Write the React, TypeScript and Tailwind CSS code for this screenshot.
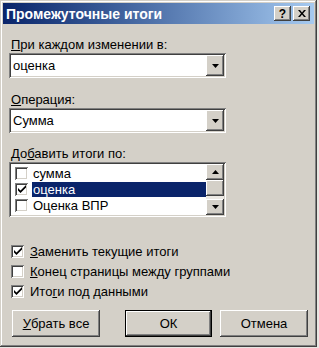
import React from "react";

const raised =
  "shadow-[inset_-1px_-1px_#404040,inset_1px_1px_#ffffff,inset_-2px_-2px_#808080,inset_2px_2px_#d4d0c8]";
const sunken =
  "shadow-[inset_1px_1px_#808080,inset_-1px_-1px_#ffffff,inset_2px_2px_#404040,inset_-2px_-2px_#d4d0c8]";

function Arrow({ up = false }: { up?: boolean }) {
  return (
    <svg width="7" height="4" viewBox="0 0 7 4">
      {up ? <polygon points="3.5,0 7,4 0,4" fill="#000" /> : <polygon points="0,0 7,0 3.5,4" fill="#000" />}
    </svg>
  );
}

function Check({ checked }: { checked: boolean }) {
  return (
    <div className={`w-[13px] h-[13px] bg-white shrink-0 flex items-center justify-center ${sunken}`}>
      {checked && (
        <svg width="8" height="8" viewBox="0 0 8 8">
          <path d="M0 3 L0 5.5 L2.5 8 L8 2.5 L8 0 L2.5 5.5 Z" fill="#000" />
        </svg>
      )}
    </div>
  );
}

function Combo({ value }: { value: string }) {
  return (
    <div className={`ml-[9px] w-[217px] h-[25px] bg-white flex items-center p-[2px] ${sunken}`}>
      <div className="flex-1 pl-[2px] text-[13px] text-black">{value}</div>
      <div className={`w-[18px] h-[21px] bg-[#d4d0c8] flex items-center justify-center ${raised}`}>
        <Arrow />
      </div>
    </div>
  );
}

export default function App() {
  const font = { fontFamily: '"Liberation Sans", Arial, sans-serif' };
  return (
    <div className="w-[319px] h-[348px] bg-[#e8e6e2]" style={font}>
      <div
        className={`w-[317px] h-[347px] bg-[#d4d0c8] flex flex-col shadow-[inset_-1px_-1px_#404040,inset_1px_1px_#d4d0c8,inset_-2px_-2px_#808080,inset_2px_2px_#ffffff]`}
      >
        <div className="mx-[3px] mt-[3px] h-[21px] bg-linear-to-r from-[#0a246a] to-[#a6caf0] flex items-center pl-[3px] pr-[4px]">
          <div className="flex-1 text-white font-bold text-[14px] leading-none">Промежуточные итоги</div>
          <div className={`w-[17px] h-[15px] bg-[#d4d0c8] flex items-center justify-center text-[12px] font-bold leading-none text-black ${raised}`}>
            ?
          </div>
          <div className={`ml-[2px] w-[17px] h-[15px] bg-[#d4d0c8] flex items-center justify-center ${raised}`}>
            <svg width="8" height="7" viewBox="0 0 8 7">
              <path d="M0 0 L2 0 L4 2.5 L6 0 L8 0 L5 3.5 L8 7 L6 7 L4 4.5 L2 7 L0 7 L3 3.5 Z" fill="#000" />
            </svg>
          </div>
        </div>

        <div className="mt-[13px] ml-[11px] h-[15px] text-[13px] leading-[15px] text-black">
          <span className="underline">П</span>ри каждом изменении в:
        </div>
        <div className="mt-px">
          <Combo value="оценка" />
        </div>

        <div className="mt-[14px] ml-[11px] h-[15px] text-[13px] leading-[15px] text-black">
          <span className="underline">О</span>перация:
        </div>
        <div className="mt-px">
          <Combo value="Сумма" />
        </div>

        <div className="mt-[13px] ml-[11px] h-[15px] text-[13px] leading-[15px] text-black">
          До<span className="underline">б</span>авить итоги по:
        </div>
        <div className={`mt-px ml-[9px] w-[217px] h-[55px] bg-white flex p-[2px] ${sunken}`}>
          <div className="flex-1 flex flex-col pt-px">
            {[
              { t: "сумма", c: false, s: false },
              { t: "оценка", c: true, s: true },
              { t: "Оценка ВПР", c: false, s: false },
            ].map((it) => (
              <div key={it.t} className="h-[16px] flex items-center">
                <div className="ml-[4px] mr-[4px]">
                  <Check checked={it.c} />
                </div>
                <div
                  className={`flex-1 h-[15px] pl-px text-[13px] leading-[15px] ${
                    it.s ? "bg-[#0a246a] text-white" : "text-black"
                  }`}
                >
                  {it.t}
                </div>
              </div>
            ))}
          </div>
          <div className="w-[18px] flex flex-col bg-[#ece9e4]">
            <div className={`h-[16px] bg-[#d4d0c8] flex items-center justify-center ${raised}`}>
              <Arrow up />
            </div>
            <div className={`h-[16px] bg-[#d4d0c8] ${raised}`} />
            <div className="flex-1" />
            <div className={`h-[16px] bg-[#d4d0c8] flex items-center justify-center ${raised}`}>
              <Arrow />
            </div>
          </div>
        </div>

        <div className="mt-[24px] flex flex-col">
          {[
            { t: "Заменить текущие итоги", u: 0, c: true },
            { t: "Конец страницы между группами", u: 0, c: false },
            { t: "Итоги под данными", u: 3, c: true },
          ].map((r) => (
            <div key={r.t} className="h-[20px] flex items-center pl-[11px]">
              <Check checked={r.c} />
              <div className="ml-[6px] text-[13px] leading-[15px] text-black">
                {r.t.slice(0, r.u)}
                <span className="underline">{r.t[r.u]}</span>
                {r.t.slice(r.u + 1)}
              </div>
            </div>
          ))}
        </div>

        <div className="mt-[9px] flex items-start">
          <div
            className={`ml-[12px] w-[88px] h-[27px] bg-[#d4d0c8] flex items-center justify-center text-[13px] text-black ${raised}`}
          >
            <span className="underline">У</span>брать все
          </div>
          <div className="ml-[25px] w-[87px] h-[27px] bg-black p-px">
            <div
              className={`w-full h-full bg-[#d4d0c8] flex items-center justify-center text-[13px] text-black ${raised}`}
            >
              ОК
            </div>
          </div>
          <div
            className={`ml-[8px] w-[88px] h-[27px] bg-[#d4d0c8] flex items-center justify-center text-[13px] text-black ${raised}`}
          >
            Отмена
          </div>
        </div>
      </div>
    </div>
  );
}
